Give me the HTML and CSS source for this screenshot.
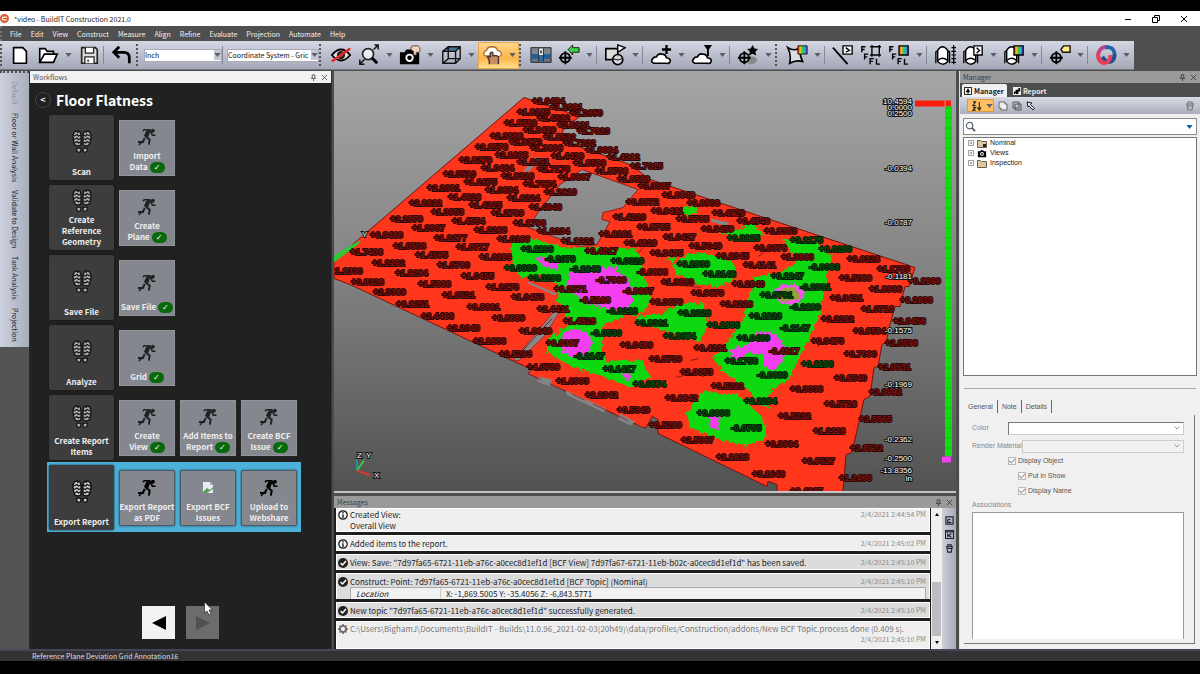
FILE: index.html
```html
<!DOCTYPE html>
<html lang="en">
<head>
<meta charset="utf-8">
<title>*video - BuildIT Construction 2021.0</title>
<link rel="stylesheet" href="styles.css">
</head>
<body>
<svg class="defs" aria-hidden="true">
  <defs>
    <linearGradient id="spectrum"><stop offset="0" stop-color="#e22"/><stop offset=".25" stop-color="#fb2"/><stop offset=".5" stop-color="#3c4"/><stop offset=".75" stop-color="#2ae"/><stop offset="1" stop-color="#83c"/></linearGradient>
    <symbol id="i-new" viewBox="0 0 24 24"><path d="M5 4h10l4 4v13H5z" fill="#fff" stroke="#000" stroke-width="1.8"/></symbol>
    <symbol id="i-open" viewBox="0 0 24 24"><path d="M3 20V5h6l2 3h7v3" fill="#fff" stroke="#000" stroke-width="1.8"/><path d="M3 20l5-9h14l-4 9z" fill="#fff" stroke="#000" stroke-width="1.8"/></symbol>
    <symbol id="i-save" viewBox="0 0 24 24"><path d="M4 4h15l2 2v15H4z" fill="#ddd" stroke="#222" stroke-width="1.800"/><path d="M8 4v6h9V4M7.500 21v-7h10v7M11 17v3" fill="#fff" stroke="#222" stroke-width="1.400"/></symbol>
    <symbol id="i-undo" viewBox="0 0 24 24"><path d="M9 3L3 9l6 6M3 9h11q6 0 6 6v6" fill="none" stroke="#000" stroke-width="3"/></symbol>
    <symbol id="i-eye" viewBox="0 0 24 24"><path d="M2 12q10-12 20 0q-10 12-20 0z" fill="#ddd" stroke="#000" stroke-width="2"/><circle cx="12" cy="12" r="4.500" fill="#222"/><circle cx="12" cy="12" r="1.500" fill="#fff"/><path d="M2 19L22 5" stroke="#e22" stroke-width="2.600"/></symbol>
    <symbol id="i-zoom" viewBox="0 0 24 24"><circle cx="11" cy="11" r="6" fill="#e6eef5" stroke="#222" stroke-width="1.800"/><path d="M15 15l6 6" stroke="#000" stroke-width="3.200"/><path d="M17 6l5-5M18 1h4v5M7 17l-5 5M2 17v5h5" fill="none" stroke="#111" stroke-width="1.600"/></symbol>
    <symbol id="i-camera" viewBox="0 0 24 24"><path d="M1 9h5l2-3h7l2 3h5v13H1z"/><circle cx="11.500" cy="15" r="4.500" fill="#fff"/><circle cx="11.500" cy="15" r="2.500"/><path d="M14 7q-3-5 3-5q6-1 6 4q0 4-4 3v3h-3V8z" fill="#f2d2bd" stroke="#543" stroke-width="1"/></symbol>
    <symbol id="i-cube" viewBox="0 0 24 24"><path d="M3 8l6-5h13l-5 5z" fill="#467199"/><path d="M3 8h14v13H3zM3 8l6-5h13v13l-5 5M17 8l5-5M9 3v13h13M3 21l6-5" fill="none" stroke="#111" stroke-width="1.500"/></symbol>
    <symbol id="i-cloudhand" viewBox="0 0 24 24"><path d="M4 13q-3-4 2-6q1-4 6-4q5 0 6 4q5 1 4 5q-2 3-6 1H7z" fill="#fff" stroke="#a86b28" stroke-width="1.400"/><path d="M9 22v-4l-2-4q2-1 3 1v-5q2-2 3 0v3q6-1 6 2v7" fill="#c98d62" stroke="#433" stroke-width="1.500"/></symbol>
    <symbol id="i-cloud" viewBox="0 0 24 24"><path d="M4 21q-4-2-1-5q1-2 4-2q2-4 6-3q4 0 5 4q5 1 4 4q-1 3-4 2z" fill="#fff" stroke="#000" stroke-width="1.800"/></symbol>
    <symbol id="i-image" viewBox="0 0 24 24"><path d="M1 4h22v16H1z" fill="#6c7480" stroke="#222"/><path d="M2 5h7v6H2zM15 5h7v6h-7z" fill="#7d868f"/><path d="M2 11h7v5H2zM15 11h7v5h-7z" fill="#1f5f98"/><path d="M9 5h1v14H9zM14 5h1v14h-1z" fill="#222"/><path d="M10 5h4v7h-4z" fill="#f2f2f2"/><path d="M11 7h2v3h-2z" fill="#444"/><path d="M10 12h4v7h-4z" fill="#2a6ca5"/></symbol>
    <symbol id="i-target" viewBox="0 0 24 24"><circle cx="8" cy="15" r="5" fill="none" stroke="#000" stroke-width="2"/><path d="M8 8v14M1 15h14" stroke="#000" stroke-width="2"/></symbol>
    <symbol id="i-shapes" viewBox="0 0 24 24"><path d="M2 5h13v12H2z" fill="#ddd" stroke="#000" stroke-width="1.800"/><path d="M15 9V1l8 3z" fill="#fff" stroke="#000" stroke-width="1.500"/><circle cx="15" cy="17" r="5.500" fill="#ddd" fill-opacity=".9" stroke="#000" stroke-width="1.800"/><path d="M10 16q5 3 10 0" fill="none" stroke="#000"/></symbol>
    <symbol id="i-surface" viewBox="0 0 24 24"><path d="M2 4q6 4 13 1q0 8 3 14q-7-2-14 2q2-9-2-17z" fill="#ddd" stroke="#000" stroke-width="1.800"/><path d="M13 2h10v9H13z" fill="url(#spectrum)" stroke="#111"/></symbol>
    <symbol id="i-line" viewBox="0 0 24 24"><path d="M1 4l16 18" stroke="#000" stroke-width="2"/><path d="M12 2h10v9H12zM15 4l4 3-4 2" fill="#fff" stroke="#000" stroke-width="1.500"/></symbol>
    <symbol id="i-ffl" viewBox="0 0 24 24"><path d="M2 9V3h4M2 6h3M5 17v-6h4M5 14h3M11 22v-6h4M11 19h3M18 16v6h4" fill="none" stroke="#000" stroke-width="1.500"/></symbol>
    <symbol id="i-grid" viewBox="0 0 24 24"><path d="M13 1v13M21 1v13M11 3h12M11 12h12" stroke="#000" stroke-width="1.500"/></symbol>
    <symbol id="i-spec" viewBox="0 0 24 24"><path d="M12 2h10v10H12z" fill="url(#spectrum)" stroke="#000" stroke-width="1.400"/></symbol>
    <symbol id="i-tank" viewBox="0 0 24 24"><path d="M4 7q5-8 11 0v12q-5 6-11 0z" fill="#fff" stroke="#000" stroke-width="1.600"/><path d="M2 8v13M17 8v13M2 8h2M15 8h2M4 18q5-5 11 0" fill="none" stroke="#000" stroke-width="1.400"/></symbol>
    <symbol id="i-ruler" viewBox="0 0 24 24"><path d="M21.500 1v21M19 4h5M19 8h5M19 12h5M19 16h5M19 20h5" stroke="#000" stroke-width="1.300"/></symbol>
    <symbol id="i-box" viewBox="0 0 24 24"><path d="M13 2h9v10h-9zM16 4l3 3-3 3" fill="#fff" stroke="#000" stroke-width="1.500"/></symbol>
    <symbol id="i-tag" viewBox="0 0 24 24"><path d="M13 6l3-4h7v7H15z" fill="#ffe98a" stroke="#111" stroke-width="1.500"/></symbol>
    <symbol id="i-rings" viewBox="0 0 24 24"><g fill="none" stroke-width="4"><path d="M7 20Q2 16 4 9Q8 1 16 4" stroke="#b8458f"/><path d="M11 4Q19 2 21 9Q23 17 15 20" stroke="#1f62a8"/><path d="M8 14Q13 21 18 19Q22 16 21 11" stroke="#264c91"/><path d="M4 9Q2 18 9 21Q16 21 17 12" stroke="#ec3d53"/></g></symbol>
    <symbol id="i-caret" viewBox="0 0 8 5"><path d="M0 0h8L4 5z" fill="#5d6069"/></symbol>
    <symbol id="i-feet" viewBox="0 0 20 24">
      <g id="foot"><path d="M2.500 14.500Q-.5 5 2.500 2Q5 0 8 2Q9.700 5 8.800 15Q5.500 17 2.500 14.500z" fill="#c8c8c8" stroke="#0c0c0c" stroke-width="1.400"/><path d="M2 6l3-1.500 1.500 1.500L9 5M2 9.500L5 8l1.500 1.500L9 8.500M2.500 13L5 11.500 6.500 13l2-1M5 2.500h1.500" fill="none" stroke="#0c0c0c" stroke-width="1.200"/><path d="M4.500 18.500q2-.8 4.500 0q.3 3.500-2 4q-2.500-.5-2.500-4z" fill="#c8c8c8" stroke="#0c0c0c" stroke-width="1.200"/></g>
      <use href="#foot" transform="matrix(-1 0 0 1 20 0)"/>
    </symbol>
    <symbol id="i-run" viewBox="0 0 20 20"><circle cx="16.500" cy="3" r="2.200"/><path d="M5.500 3.500L7 2h6l3 6h3.500" fill="none" stroke="#000" stroke-width="1.800"/><path d="M9.500 2.500h4.500L11.500 10l-5-1z"/><path d="M8 9l5 4-1 5.500M7.500 11l-2 4.500H0" fill="none" stroke="#000" stroke-width="2.200"/><path d="M1 19L6 14" stroke="#000" stroke-width="1.500"/></symbol>
    <symbol id="i-pin" viewBox="0 0 8 8"><path d="M2.500 1v4M5.500 1v4M2.500 1h3M1 5h6M4 5v3" fill="none" stroke="currentColor"/></symbol>
    <symbol id="i-close" viewBox="0 0 8 8"><path d="M1 1l6 6M7 1L1 7" fill="none" stroke="currentColor"/></symbol>
    <symbol id="i-info" viewBox="0 0 10 10"><circle cx="5" cy="5" r="4.200" fill="#fff" stroke="#111" stroke-width="1.200"/><path d="M5 4.300V8M5 2v1.400" stroke="#111" stroke-width="1.300"/></symbol>
    <symbol id="i-ok" viewBox="0 0 10 10"><circle cx="5" cy="5" r="5" fill="#222"/><path d="M2.500 5l2 2 3.500-4" fill="none" stroke="#fff" stroke-width="1.500"/></symbol>
    <symbol id="i-gear" viewBox="0 0 10 10"><circle cx="5" cy="5" r="3" fill="none" stroke="#666" stroke-width="1.700"/><path d="M5 0v2M5 8v2M0 5h2M8 5h2M1.500 1.500l1.200 1.200M7.300 7.300l1.200 1.200M8.500 1.500L7.300 2.700M2.700 7.300L1.500 8.500" stroke="#666" stroke-width="1.600"/></symbol>
    <symbol id="i-folder" viewBox="0 0 10 9"><path d="M.5 8.500v-7h3l1 1h5v6z" fill="#d8c8a4" stroke="#6e614b"/></symbol>
    <symbol id="i-plus" viewBox="0 0 7 7"><path d="M.5.5h6v6h-6zM2 3.500h3M3.500 2v3" fill="none" stroke="#888"/></symbol>
    <symbol id="i-chev" viewBox="0 0 6 4"><path d="M.5.500L3 3 5.500.500" fill="none" stroke="#999"/></symbol>
    <symbol id="i-trash" viewBox="0 0 10 10"><path d="M1 3h8M3 3V1h4v2M2 3l1 6h4l1-6M2 5h6" fill="none" stroke="currentColor" stroke-width="1.200"/></symbol>
  </defs>
</svg>

<div class="app">
  <header class="titlebar">
    <svg class="logo" viewBox="0 0 10 10"><circle cx="5" cy="5" r="5" fill="#e2572b"/><path d="M7.500 3.500H4a1.500 1.500 0 000 3h3.500" fill="none" stroke="#fff" stroke-width="1.200"/></svg>
    <span class="title">*video - BuildIT Construction 2021.0</span>
    <div class="window-buttons">
      <button aria-label="Minimize"><svg viewBox="0 0 8 8"><path d="M1 4.500h6" stroke="#000"/></svg></button>
      <button aria-label="Restore"><svg viewBox="0 0 8 8"><path d="M.5 2.500h5v5h-5zM2.500 2.500v-2h5v5h-2" fill="none" stroke="#000"/></svg></button>
      <button aria-label="Close"><svg viewBox="0 0 8 8"><path d="M1 1l6 6M7 1L1 7" stroke="#000"/></svg></button>
    </div>
  </header>

  <nav class="menubar">
    <button>File</button><button>Edit</button><button>View</button><button>Construct</button><button>Measure</button><button>Align</button><button>Refine</button><button>Evaluate</button><button>Projection</button><button>Automate</button><button>Help</button>
  </nav>

  <div class="toolbar-strip">
    <div class="toolbar">
      <i class="grip first"></i>
      <button class="tool" aria-label="New"><svg><use href="#i-new"/></svg></button>
      <button class="tool drop" aria-label="Open"><svg><use href="#i-open"/></svg><svg class="caret"><use href="#i-caret"/></svg></button>
      <button class="tool" aria-label="Save"><svg><use href="#i-save"/></svg></button>
      <i class="sep"></i>
      <button class="tool" aria-label="Undo"><svg><use href="#i-undo"/></svg></button>
      <i class="grip"></i>
      <span class="combo unit"><select aria-label="Unit"><option>Inch</option></select><svg class="caret"><use href="#i-caret"/></svg></span>
      <i class="sep"></i>
      <span class="combo coord"><select aria-label="Coordinate system"><option>Coordinate System - Gric</option></select><svg class="caret"><use href="#i-caret"/></svg></span>
      <i class="grip"></i>
      <button class="tool" aria-label="Hide"><svg><use href="#i-eye"/></svg></button>
      <button class="tool drop" aria-label="Zoom"><svg><use href="#i-zoom"/></svg><svg class="caret"><use href="#i-caret"/></svg></button>
      <button class="tool drop" aria-label="Camera"><svg><use href="#i-camera"/></svg><svg class="caret"><use href="#i-caret"/></svg></button>
      <button class="tool drop" aria-label="View cube"><svg><use href="#i-cube"/></svg><svg class="caret"><use href="#i-caret"/></svg></button>
      <button class="tool drop active" aria-label="Pick cloud"><svg><use href="#i-cloudhand"/></svg><svg class="caret"><use href="#i-caret"/></svg></button>
      <i class="grip"></i>
      <button class="tool" aria-label="Compare"><svg><use href="#i-image"/></svg></button>
      <button class="tool drop" aria-label="Align"><svg viewBox="0 0 24 24"><use href="#i-target"/><path d="M11 6l5-5v3h7v5h-7v3z" fill="#3ad243" stroke="#111"/></svg><svg class="caret"><use href="#i-caret"/></svg></button>
      <i class="sep"></i>
      <button class="tool drop" aria-label="Shapes"><svg><use href="#i-shapes"/></svg><svg class="caret"><use href="#i-caret"/></svg></button>
      <i class="sep"></i>
      <button class="tool drop" aria-label="Add cloud"><svg viewBox="0 0 24 24"><use href="#i-cloud"/><path d="M18 1v10M13 6h10" stroke="#000" stroke-width="2.500"/></svg><svg class="caret"><use href="#i-caret"/></svg></button>
      <button class="tool drop" aria-label="Filter cloud"><svg viewBox="0 0 24 24"><use href="#i-cloud"/><path d="M14 1h9l-3.500 5v7h-2V6z"/></svg><svg class="caret"><use href="#i-caret"/></svg></button>
      <i class="sep"></i>
      <button class="tool drop" aria-label="Feature"><svg viewBox="0 0 24 24"><path d="M14 14q7-2 8 4q-2 5-10 4z" fill="#888"/><use href="#i-target"/><path d="M17 1l2 4 4 .5-3 3 1 4-4-2-4 2 1-4-3-3 4-.5z"/></svg><svg class="caret"><use href="#i-caret"/></svg></button>
      <i class="grip"></i>
      <button class="tool drop" aria-label="Surface deviation"><svg><use href="#i-surface"/></svg><svg class="caret"><use href="#i-caret"/></svg></button>
      <i class="sep"></i>
      <button class="tool" aria-label="Line"><svg><use href="#i-line"/></svg></button>
      <button class="tool" aria-label="Floor grid"><svg viewBox="0 0 24 24"><use href="#i-ffl"/><use href="#i-grid"/></svg></button>
      <button class="tool drop" aria-label="Floor colors"><svg viewBox="0 0 24 24"><use href="#i-ffl"/><use href="#i-spec"/></svg><svg class="caret"><use href="#i-caret"/></svg></button>
      <i class="sep"></i>
      <button class="tool" aria-label="Tank scale"><svg viewBox="0 0 24 24"><use href="#i-tank"/><use href="#i-ruler"/></svg></button>
      <button class="tool drop" aria-label="Tank section"><svg viewBox="0 0 24 24"><use href="#i-tank"/><use href="#i-box"/></svg><svg class="caret"><use href="#i-caret"/></svg></button>
      <button class="tool drop" aria-label="Tank colors"><svg viewBox="0 0 24 24"><use href="#i-tank"/><use href="#i-spec"/></svg><svg class="caret"><use href="#i-caret"/></svg></button>
      <i class="sep"></i>
      <button class="tool drop" aria-label="Annotate"><svg viewBox="0 0 24 24"><use href="#i-target"/><use href="#i-tag"/></svg><svg class="caret"><use href="#i-caret"/></svg></button>
      <i class="sep"></i>
      <button class="tool drop" aria-label="Connect"><svg><use href="#i-rings"/></svg><svg class="caret"><use href="#i-caret"/></svg></button>
    </div>
  </div>

  <main class="workspace">
    <aside class="rail">
      <div class="rail-tabs">
        <button class="muted">Default</button><button>Floor or Wall Analysis</button><button>Validate to Design</button><button>Tank Analysis</button><button>Projection</button>
      </div>
    </aside>

    <section class="workflows">
      <div class="panel-head light"><span>Workflows</span><button aria-label="Pin"><svg><use href="#i-pin"/></svg></button><button aria-label="Close"><svg><use href="#i-close"/></svg></button></div>
      <div class="flow">
        <div class="flow-title"><button class="back" aria-label="Back">&lt;</button><h1>Floor Flatness</h1></div>
        <div class="row"><button class="step"><svg><use href="#i-feet"/></svg><span>Scan</span></button>
          <button class="act"><svg><use href="#i-run"/></svg><span>Import<br>Data <b class="ok">✓</b></span></button></div>
        <div class="row"><button class="step"><svg><use href="#i-feet"/></svg><span>Create<br>Reference<br>Geometry</span></button>
          <button class="act"><svg><use href="#i-run"/></svg><span>Create<br>Plane <b class="ok">✓</b></span></button></div>
        <div class="row"><button class="step"><svg><use href="#i-feet"/></svg><span>Save File</span></button>
          <button class="act"><svg><use href="#i-run"/></svg><span>Save File <b class="ok">✓</b></span></button></div>
        <div class="row"><button class="step"><svg><use href="#i-feet"/></svg><span>Analyze</span></button>
          <button class="act"><svg><use href="#i-run"/></svg><span>Grid <b class="ok">✓</b></span></button></div>
        <div class="row"><button class="step"><svg><use href="#i-feet"/></svg><span>Create Report<br>Items</span></button>
          <button class="act"><svg><use href="#i-run"/></svg><span>Create<br>View <b class="ok">✓</b></span></button>
          <button class="act"><svg><use href="#i-run"/></svg><span>Add Items to<br>Report <b class="ok">✓</b></span></button>
          <button class="act"><svg><use href="#i-run"/></svg><span>Create BCF<br>Issue <b class="ok">✓</b></span></button></div>
        <div class="row current"><button class="step"><svg><use href="#i-feet"/></svg><span>Export Report</span></button>
          <button class="act"><svg><use href="#i-run"/></svg><span>Export Report<br>as PDF</span></button>
          <button class="act"><svg class="broken" viewBox="0 0 10 11"><path d="M0 0h7l3 3v8H0z" fill="#e5edf0"/><path d="M0 10l4-4 3 2 3-3v2l-6 4H0z" fill="#5b9a58"/><path d="M7 0v3h3z" fill="#9ab"/></svg><span>Export BCF<br>Issues</span></button>
          <button class="act"><svg><use href="#i-run"/></svg><span>Upload to<br>Webshare</span></button></div>
        <div class="pager">
          <button aria-label="Previous"><svg viewBox="0 0 14 14"><path d="M14 0v14L0 7z"/></svg></button>
          <button class="off" aria-label="Next" disabled><svg viewBox="0 0 14 14"><path d="M0 0v14l14-7z" fill="#505050"/></svg></button>
          <svg class="cursor" viewBox="0 0 9 14"><path d="M.5.5v11l2.500-2 2 4 2-1-2-4h3.500z" fill="#fff" stroke="#333" stroke-width=".8"/></svg>
        </div>
      </div>
    </section>

    <section class="center">
      <div class="viewport">
        <svg class="scene" viewBox="334 71 622 421" preserveAspectRatio="xMidYMid slice">
          <defs>
            <filter id="rough" x="-5%" y="-5%" width="110%" height="110%" color-interpolation-filters="sRGB"><feTurbulence type="fractalNoise" baseFrequency=".25" numOctaves="2" seed="4"/><feDisplacementMap in="SourceGraphic" scale="7" xChannelSelector="R" yChannelSelector="G"/></filter>
            <linearGradient id="hole" x2="0" y2="1"><stop offset="0" stop-color="#929292"/><stop offset="1" stop-color="#858585"/></linearGradient>
          </defs>
          <path d="M524 98L580 117 565 128 558 140 607 157 630 165 650 180 773 221 915 268 909 287 905 287 900 307 895 307 890 325 886 343 882 345 878 367 874 368 870 397 864 400 852 453 846 455 843 492H777V485L768 482 767 487 658 434V420L652 417 646 428 643 428 528 374 532 370 512 361 350 285 334 279V261z" fill="#ff351c" stroke="#701410" stroke-width="1"/>
          <path d="M334 256L361 240 358 245 334 263z" fill="#2cc935"/>
          <path d="M582 170L638 190 623 208 612 211 603 213 602 220 610 222 597 245 580 247 528 228 538 213 560 185z" fill="url(#hole)" stroke="#8e1c14"/>
          <path d="M523 172L535 158 542 158 529 172zM494 157l8-7-3 8zM528 282l29 12-2 2-27-12zM539 377l13 3-2 7-13-5zM600 402l12 7M566 391l40 18-2 4-38-18zM620 414l15 8-4 4-13-6zM711 219l18 4-2 4-16-5z" fill="#858585"/>
          <path d="M513 361L554 312 559 313 545 336 519 361z" fill="#888" stroke="#a82c22"/>
          <path d="M528 374L643 428" stroke="#8a3434" stroke-dasharray="15 9"/>
          <path d="M519 355l33-36M650 240l-12 14M661 284l40 4M676 378l16-4 12 3M690 361l9-2M817 347l7-4M758 257l6-4" fill="none" stroke="#8b1d18"/>
          <g filter="url(#rough)">
            <g fill="#0ed910">
              <path d="M512 242L530 239 563 248 590 248 637 250 645 275 650 300 645 312 623 317 603 325 602 350 606 362 617 361 643 362 650 377 632 388 603 377 587 372 570 367 547 352 547 340 563 330 570 323 557 300 558 287 547 274 520 278 512 262z"/>
              <path d="M672 267L686 255 706 253 733 262 737 278 717 288 697 284 677 274z"/>
              <path d="M636 316L660 315 683 303 703 304 708 323 700 342 683 338 660 329 636 323z"/>
              <path d="M783 240L813 242 833 257 827 275 823 295 820 313 811 335 797 362 790 380 773 390 765 400 770 410 760 404 750 392 723 372 713 357 730 340 743 320 751 293 753 278 780 273 797 262z"/>
              <path d="M687 413L703 392 737 395 763 417 766 438 747 447 720 440 690 428z"/>
              <path d="M682 208l12-2 4 8-14 2zM718 233l24-4 10-8 5 8 8 6-20 3zM665 260l12-3-3 6z"/>
            </g>
            <g fill="#f33ff0">
              <path d="M570 273L590 267 615 268 630 282 634 299 627 311 608 310 587 303 565 289z"/>
              <path d="M535 258l10 0 7 5 9-2-3 9-8-1-8-5zM621 373l8 0 1 8-6-2z"/>
              <ellipse cx="576" cy="344" rx="16" ry="14"/>
              <path d="M727 350L748 346 757 332 775 333 788 350 775 371 763 366 765 356 750 353 737 361z"/>
              <path d="M709 417l11-1-2 14h-6z"/>
            </g>
            <ellipse cx="789" cy="295" rx="13" ry="9" fill="#9aa03c" stroke="#f055ee" stroke-width="4"/>
          </g>
          <g id="deviations" class="deviations"></g>
          <g class="scale">
            <path d="M915 101h36v6h-36z" fill="#fb1d0c"/><path d="M945 107h7v350h-7z" fill="#10dd10"/><path d="M945 101v6" stroke="#fb8c7c"/><path d="M948.500 108v349" stroke="#0b9c0f" stroke-width="7" stroke-opacity=".4" stroke-dasharray="1 9"/><path d="M942 457h9v6h-9z" fill="#f53ff2"/>
            <text x="912" y="104">10.4594</text><text x="912" y="110">0.0000</text><text x="912" y="116">0.2500</text><text x="912" y="171">-0.0394</text><text x="912" y="225">-0.0787</text><text x="912" y="279">-0.1181</text><text x="912" y="333">-0.1575</text><text x="912" y="387">-0.1969</text><text x="912" y="442">-0.2362</text><text x="912" y="461">-0.2500</text><text x="912" y="473">-13.8356</text><text x="912" y="481">in</text>
          </g>
          <path d="M357 471v-12" stroke="#2d8d93" stroke-width="2"/><path d="M357 471l7-10" stroke="#35cc45" stroke-width="2"/><path d="M357 471l13 5" stroke="#d8372b" stroke-width="2"/>
          <g class="axes"><text x="357" y="458">Z</text><text x="366" y="458">Y</text><text x="374" y="478">X</text><text x="362" y="237">Y</text></g>
        </svg>
      </div>

      <section class="messages">
        <div class="panel-head dim"><span>Messages</span><button aria-label="Pin"><svg><use href="#i-pin"/></svg></button><button aria-label="Close"><svg><use href="#i-close"/></svg></button></div>
        <div class="msg-body">
          <ul class="msg-list">
            <li class="msg first"><svg><use href="#i-info"/></svg><p>Created View:<br>Overall View</p><time>2/4/2021 2:44:54 PM</time></li>
            <li class="msg"><svg><use href="#i-info"/></svg><p>Added items to the report.</p><time>2/4/2021 2:45:02 PM</time></li>
            <li class="msg alt"><svg><use href="#i-ok"/></svg><p>View: Save: "7d97fa65-6721-11eb-a76c-a0cec8d1ef1d [BCF View] 7d97fa67-6721-11eb-b02c-a0cec8d1ef1d" has been saved.</p><time>2/4/2021 2:45:10 PM</time></li>
            <li class="msg alt detail"><svg><use href="#i-ok"/></svg><p>Construct: Point: 7d97fa65-6721-11eb-a76c-a0cec8d1ef1d [BCF Topic] (Nominal)</p><time>2/4/2021 2:45:10 PM</time><dl><dt>Location</dt><dd>X: -1,869.5005 Y: -35.4056 Z: -6,843.5771</dd></dl></li>
            <li class="msg alt"><svg><use href="#i-ok"/></svg><p>New topic "7d97fa65-6721-11eb-a76c-a0cec8d1ef1d" successfully generated.</p><time>2/4/2021 2:45:10 PM</time></li>
            <li class="msg done"><svg><use href="#i-gear"/></svg><p>C:\Users\BighamJ\Documents\BuildIT - Builds\11.0.96_2021-02-03(20h49)\data/profiles/Construction/addons/New BCF Topic.process done (0.409 s).</p><time>2/4/2021 2:45:10 PM</time></li>
          </ul>
          <div class="scroller"><svg viewBox="0 0 6 4"><path d="M1 4h4L3 1z"/></svg><i></i><svg viewBox="0 0 6 4"><path d="M1 0h4L3 3z"/></svg></div>
          <div class="msg-tools">
            <button aria-label="Save log"><svg viewBox="0 0 10 10"><path d="M1 1h8v8H1zM3 4v3h4M3 4h3" fill="none" stroke="#223" stroke-width="1.300"/></svg></button>
            <button aria-label="Clear"><svg viewBox="0 0 10 10"><path d="M.5.500h9v9h-9zM0 2h10M3 4v4M7 4L4 6l3 2" fill="none" stroke="#223" stroke-width="1.300"/></svg></button>
            <button aria-label="Delete"><svg><use href="#i-trash"/></svg></button>
          </div>
        </div>
      </section>
    </section>

    <aside class="manager">
      <div class="panel-head dim"><span>Manager</span><button aria-label="Pin"><svg><use href="#i-pin"/></svg></button><button aria-label="Close"><svg><use href="#i-close"/></svg></button></div>
      <div class="mgr-tabs">
        <button class="on"><svg viewBox="0 0 9 9"><path d="M.5.5h8v8h-8z" fill="#fff" stroke="#000"/><path d="M4.500 1L7 6H5v2H4V6H2z"/></svg>Manager</button>
        <button><svg viewBox="0 0 9 9"><path d="M0 0h9v9H0z" fill="#eee"/><path d="M1 5h2v3H1zM3 3h3v5H3zM6 1h2v4H6z"/></svg>Report</button>
      </div>
      <div class="mgr-tools">
        <button class="sort" aria-label="Sort"><svg viewBox="0 0 11 11"><path d="M1 1h3L1 5h3M1 7h3l-3 3h3M8 1v8M6 7l2 3 2-3" fill="none" stroke="#222" stroke-width="1.200"/></svg><svg class="caret"><use href="#i-caret"/></svg></button>
        <button aria-label="Union"><svg viewBox="0 0 10 10"><path d="M1 1h6v2h2v6H3V7H1z" fill="#eee" stroke="#666"/></svg></button>
        <button aria-label="Intersect"><svg viewBox="0 0 10 10"><path d="M1 1h6v6H1zM3 3h6v6H3z" fill="none" stroke="#555"/></svg></button>
        <button aria-label="Pick"><svg viewBox="0 0 10 10"><path d="M1 1l5 1-1.500 1.500 4 4-1.500 1.500-4-4L2 6z" fill="#ddd" stroke="#222"/></svg></button>
        <button class="bin" aria-label="Delete"><svg><use href="#i-trash"/></svg></button>
      </div>
      <label class="search"><svg viewBox="0 0 12 12"><circle cx="5" cy="5" r="3.500" fill="none" stroke="#567" stroke-width="1.300"/><path d="M7.500 7.500L11 11" stroke="#456" stroke-width="1.800"/></svg><input type="text" aria-label="Search"><svg class="caret" viewBox="0 0 8 5"><path d="M0 0h8L4 5z" fill="#1c5f9d"/></svg></label>
      <ul class="tree">
        <li><svg class="pm"><use href="#i-plus"/></svg><svg viewBox="0 0 10 9"><use href="#i-folder"/><path d="M6 5h3v3H6z" fill="#222"/></svg>Nominal</li>
        <li><svg class="pm"><use href="#i-plus"/></svg><svg viewBox="0 0 24 24"><path d="M1 6h6l2-3h6l2 3h6v16H1z"/><circle cx="12" cy="13" r="5" fill="#fff"/><circle cx="12" cy="13" r="2.500"/></svg>Views</li>
        <li><svg class="pm"><use href="#i-plus"/></svg><svg><use href="#i-folder"/></svg>Inspection</li>
      </ul>
      <hr>
      <div class="prop-tabs"><button class="on">General</button><button>Note</button><button>Details</button></div>
      <div class="props">
        <div class="field"><label for="color">Color</label><span class="pick white"><select id="color" disabled></select><svg><use href="#i-chev"/></svg></span></div>
        <div class="field mat"><label for="mat">Render Material</label><span class="pick"><select id="mat" disabled></select><svg><use href="#i-chev"/></svg></span></div>
        <label class="check"><input type="checkbox" checked disabled>Display Object</label>
        <label class="check in"><input type="checkbox" checked disabled>Put in Show</label>
        <label class="check in"><input type="checkbox" checked disabled>Display Name</label>
        <label class="assoc" for="assoc">Associations</label>
        <textarea id="assoc" readonly></textarea>
      </div>
    </aside>
  </main>

  <footer class="statusbar">Reference Plane Deviation Grid Annotation16</footer>
</div>
<script src="script.js"></script>
</body>
</html>
```
FILE: styles.css
```css
* { box-sizing: border-box; }
body { margin: 0; background: #000; color: #222; font: 7px/10px "Noto Sans CJK SC", "Open Sans", sans-serif; }
button { font: inherit; color: inherit; background: none; border: 0; padding: 0; margin: 0; }
svg { display: block; flex: none; }
ul, dl, dd, p { margin: 0; padding: 0; list-style: none; }
.defs { position: absolute; width: 0; height: 0; }

.app { height: 100vh; padding: 11px 0 13px; display: flex; flex-direction: column; background: #000; }

.titlebar { height: 15px; flex: none; background: #fff; display: flex; align-items: center; gap: 5px; }
.logo { width: 9px; height: 9px; }
.title { flex: 1; }
.window-buttons { display: flex; gap: 20px; padding-right: 12px; }
.window-buttons svg { width: 8px; height: 8px; }

.menubar { height: 15px; flex: none; background: #4f4f50; color: #f2f2f2; display: flex; align-items: center; gap: 9px; padding-left: 8px; border-left: 2px dotted #777; }

.toolbar-strip { height: 29px; flex: none; background: #4f4f50; }
.toolbar { display: flex; height: 29px; width: max-content; padding-right: 1px; align-items: center; background: linear-gradient(#d5d8e3, #b9bdcb 55%, #a5a9b7); border-bottom: 1px solid #74777f; }
.grip { width: 8px; height: 22px; border-left: 2px dotted #555; background-clip: padding-box; }
.grip.first { width: 6px; }
.sep { width: 5px; height: 18px; border-left: 1px solid #85889a; }
.tool { width: 28px; height: 27px; display: flex; align-items: center; justify-content: center; }
.tool svg { width: 22px; height: 22px; }
.tool.drop { width: 41px; justify-content: flex-start; padding-left: 3px; gap: 6px; }
.tool svg.caret, .combo svg.caret { width: 7px; height: 4px; }
.tool.active { background: linear-gradient(#ffd98f, #fdb549 60%, #ffdf8f); border: 1px solid #e8a94c; padding-left: 2px; }
.combo { display: flex; align-items: center; height: 13px; background: #fff; border: 1px solid #a9acb8; }
.combo select { appearance: none; flex: 1; min-width: 0; border: 0; background: none; font: inherit; padding: 0; color: #111; overflow: hidden; }
.combo .caret { background: #c3c7d3; box-sizing: content-box; padding: 3px 0; }
.combo.unit { width: 78px; }
.combo.coord { width: 92px; }

.workspace { flex: 1; min-height: 0; display: flex; background: #4d4d4e; padding-top: 1px; }

.rail { width: 30px; flex: none; background: #535354; border-right: 1px solid #2c2c2c; }
.rail-tabs { display: flex; flex-direction: column; align-items: center; gap: 8px; padding: 8px 0 5px; border-top: 2px dotted #555; background: linear-gradient(90deg, #cdd1dd, #a9aebd); }
.rail-tabs button { writing-mode: vertical-rl; line-height: 12px; color: #222; }
.rail-tabs .muted { color: #8b8e9a; }

.panel-head { height: 12px; flex: none; display: flex; align-items: center; gap: 4px; padding: 0 3px; }
.panel-head span { flex: 1; }
.panel-head svg { width: 7px; height: 7px; }
.panel-head.light { background: #f2f2f4; color: #555; }
.panel-head.dim { background: #9a9a9b; color: #3b3b3b; }

.workflows { width: 302px; flex: none; display: flex; flex-direction: column; border-right: 1px solid #333; }
.flow { flex: 1; background: #212121; color: #eee; display: flex; flex-direction: column; align-items: flex-start; padding: 5px 0 10px 17px; font-size: 8px; font-weight: bold; line-height: 11px; }
.flow-title { display: flex; align-items: center; gap: 5px; height: 23px; margin: 0 0 1px -12px; }
.back { width: 16px; height: 16px; border: 1px solid #444; border-radius: 8px; font-size: 9px; line-height: 12px; }
h1 { margin: 0; color: #fff; font-size: 14px; line-height: 20px; font-weight: bold; }
.row { display: flex; height: 70px; padding: 3px 4px 2px 2px; align-items: center; gap: 5px; }
.row > button { display: flex; flex-direction: column; align-items: center; text-align: center; color: #eee; white-space: nowrap; }
.step { width: 65px; height: 65px; padding: 3px 0; background: #3d3d3d; border-radius: 2px; box-shadow: 0 0 2px #111; }
.step svg { width: 20px; height: 24px; margin: auto; opacity: .8; }
.act { width: 56px; height: 56px; padding: 4px 0 2px; background: #85878f; border: 1px solid #93959c; }
.act svg { width: 18px; height: 18px; margin: auto; opacity: .75; }
.ok { display: inline-block; width: 15px; height: 11px; border-radius: 6px; background: #08690c; color: #fff; font: bold 8px/11px "DejaVu Sans", sans-serif; }
.current { background: #4bb1d9; }
.row.current svg { opacity: 1; }
.current .act { border: 1px solid #4c5c66; border-radius: 2px; box-shadow: 0 0 2px #234; }
.current .act svg.broken { width: 10px; height: 11px; }
.pager { position: relative; display: flex; gap: 11px; margin: auto 0 0 95px; }
.pager button { width: 33px; height: 33px; display: grid; place-items: center; background: #f2f2f2; }
.pager button svg { width: 14px; height: 14px; }
.pager .off { background: #6c6c6c; }
.cursor { position: absolute; left: 62px; top: -5px; width: 9px; height: 15px; }

.center { flex: 1; min-width: 0; display: flex; flex-direction: column; margin: 0 3px 0 2px; }
.viewport { flex: 1; min-height: 0; background: linear-gradient(#a6a5a7, #858585 45%, #525252); border-bottom: 2px solid #c4c4c4; overflow: hidden; }
.scene { width: 100%; height: 100%; }
.deviations text { font: bold 9px "Liberation Sans", Arial, sans-serif; fill: #7a120f; stroke: #2b0504; stroke-width: 2px; paint-order: stroke; }
.deviations text.in { fill: #0a4c0e; stroke: #041c05; }
.scale text, .axes text { font: 8px "Liberation Sans", Arial, sans-serif; fill: #fff; stroke: #111; stroke-width: 2px; paint-order: stroke; }
.scale text { text-anchor: end; }

.messages { flex: none; display: flex; flex-direction: column; margin-top: 3px; }
.msg-body { display: flex; height: 141px; background: #1e1e1e; }
.msg-list { flex: 1; min-width: 0; display: flex; flex-direction: column; gap: 3px; padding: 0 1px 0 2px; }
.msg { display: flex; flex-wrap: wrap; gap: 0 2px; padding: 2px 3px 1px 1px; background: #efeff0; border: 1px solid #fff; font-size: 8px; line-height: 11px; }
.msg.first { padding-top: 0; padding-bottom: 0; }
.msg.alt { background: #dcdcdd; }
.msg svg { width: 10px; height: 10px; margin-top: 1px; }
.msg p { flex: 1; white-space: nowrap; }
.msg time { font-size: 7px; color: #8a8a8a; }
.msg.done { flex: 1; align-content: flex-start; padding-top: 1px; color: #777; }
.msg.done p { flex: 1 0 90%; }
.msg.done time { margin-left: auto; }
.msg.detail { padding-bottom: 0; border-bottom: 0; }
.msg dl { flex: 0 0 calc(100% - 12px); display: flex; margin-left: 12px; background: #f1f1f2; border: 1px solid #aaa; border-bottom: 0; }
.msg dt { width: 90px; padding-left: 5px; font-style: italic; border-right: 1px solid #ccc; }
.msg dd { padding-left: 5px; }
.scroller { width: 11px; display: flex; flex-direction: column; align-items: center; background: #f0f0f0; padding: 4px 0; }
.scroller svg { width: 6px; height: 4px; }
.scroller i { width: 9px; flex: 1; margin: 66px 0 5px; background: #bdbdbf; }
.msg-tools { width: 14px; background: linear-gradient(90deg, #cdd0db, #a6aab8); display: flex; flex-direction: column; align-items: center; gap: 5px; padding-top: 8px; }
.msg-tools svg { width: 9px; height: 9px; color: #223; }

.manager { width: 241px; flex: none; display: flex; flex-direction: column; background: #f0f0f1; color: #222; border-left: 1px solid #ddd; }
.mgr-tabs { display: flex; gap: 4px; height: 14px; background: #4d4d4e; color: #eee; font-weight: bold; padding: 1px 0 0 2px; }
.mgr-tabs button { display: flex; align-items: center; gap: 2px; padding: 0 3px 0 2px; }
.mgr-tabs svg { width: 8px; height: 8px; }
.mgr-tabs .on { background: #f0f0f1; color: #222; border-radius: 2px 2px 0 0; }
.mgr-tools { display: flex; align-items: center; gap: 4px; height: 17px; padding: 0 5px 0 7px; background: linear-gradient(#d8dbe5, #aaaebc); color: #777; }
.mgr-tools svg { width: 10px; height: 10px; }
.mgr-tools .sort { display: flex; align-items: center; gap: 4px; width: 27px; height: 13px; padding: 0 4px; background: #fdbf62; border: 1px solid #e09a3d; }
.mgr-tools .caret { width: 7px; height: 4px; }
.mgr-tools .bin { margin-left: auto; }
.search { display: flex; align-items: center; height: 17px; margin: 4px 3px 2px; padding: 0 3px 0 1px; border: 1px solid #8a8a8a; background: #fff; }
.search svg { width: 11px; height: 11px; }
.search input { flex: 1; min-width: 0; border: 0; outline: 0; font: inherit; }
.search .caret { width: 7px; height: 4px; }
.tree { height: 239px; margin: 0 3px; padding: 0 4px; border: 1px solid #777; background: #fff; font: 7px/10px "Liberation Sans", Arial, sans-serif; }
.tree li { display: flex; align-items: center; height: 10px; gap: 3px; }
.tree svg { width: 10px; height: 9px; }
.tree svg.pm { width: 6px; height: 6px; }
hr { width: calc(100% - 8px); margin: 12px 4px 11px; border: 0; border-top: 1px solid #aaa; }
.prop-tabs { display: flex; height: 15px; margin-left: 8px; color: #555; font: 7px/14px "Liberation Sans", Arial, sans-serif; }
.prop-tabs button { padding: 0 4px; border-right: 1px solid #666; line-height: 14px; height: 13px; }
.prop-tabs .on { padding-left: 0; }
.props { flex: 1; min-height: 0; display: flex; flex-direction: column; margin: 0 5px 5px 4px; padding: 6px 10px 4px 8px; border-right: 1px solid #777; border-bottom: 1px solid #777; color: #555; font: 7px/10px "Liberation Sans", Arial, sans-serif; }
.field { display: flex; align-items: center; color: #888; height: 14px; margin-bottom: 4px; }
.field.mat { margin-bottom: 0; }
.field label { width: 36px; }
.field.mat label { width: 50px; white-space: nowrap; }
.pick { flex: 1; display: flex; align-items: center; height: 13px; padding-right: 3px; border: 1px solid #ccc; }
.pick.white { background: #fff; border-color: #777 #ccc #ccc #777; }
.pick select { flex: 1; height: 9px; appearance: none; border: 0; background: none; }
.pick svg { width: 6px; height: 4px; }
.check { display: flex; align-items: center; gap: 2px; height: 15px; margin-left: 36px; }
.check.in { margin-left: 46px; }
.check input { appearance: none; width: 8px; height: 8px; margin: 0; border: 1px solid #bbb; background: #fafafa; display: grid; place-items: center; }
.check input::before { content: ""; width: 5px; height: 3px; margin-bottom: 1px; border: solid #999; border-width: 0 0 1px 1px; transform: rotate(-45deg); }
.assoc { color: #888; height: 14px; line-height: 14px; }
textarea { flex: 1; min-height: 0; resize: none; border: 1px solid #999; border-bottom: 0; background: #fff; outline: 0; }

.statusbar { height: 12px; flex: none; background: #333335; border-top: 2px solid #45465a; color: #ddd; padding-left: 32px; line-height: 10px; }
```
FILE: script.js
```js
// Deviation annotations: [left, middle, value]; a trailing 1 marks values within tolerance.
const deviations = [
  [532,101,"+2.0484"],[550,107,"+1.2081"],[570,113,"+2.2650"],[517,112,"+1.8185"],[537,118,"+2.4612"],[557,125,"+2.8131"],[577,131,"+2.7823"],
  [504,123,"+1.8789"],[523,130,"+2.8489"],[543,137,"+1.8532"],[563,143,"+2.7232"],[585,150,"+1.9884"],[607,157,"+1.4212"],[630,166,"+2.7015"],
  [490,136,"+2.3886"],[509,142,"+2.8372"],[530,148,"+1.3886"],[551,156,"+1.4439"],[573,163,"+1.8589"],[595,171,"+1.8786"],[617,179,"+1.8586"],
  [475,147,"+2.1576"],[495,155,"+2.1668"],[517,162,"+1.1151"],[537,169,"+2.7178"],[558,177,"+1.8687"],
  [459,160,"+2.8279"],[481,168,"+1.0464"],[501,176,"+2.8326"],[523,184,"+0.7674"],[544,192,"+1.2610"],
  [443,174,"+2.3510"],[464,182,"+1.2675"],[485,190,"+1.0684"],[507,198,"+1.6224"],[529,207,"+1.4646"],
  [427,188,"+2.2081"],[448,197,"+1.4626"],[469,205,"+1.4225"],[491,213,"+1.2789"],[513,223,"+1.1798"],[537,231,"+1.0234"],[561,241,"+1.1222"],[585,251,"+0.4017"],
  [409,203,"+2.2612"],[431,212,"+1.3953"],[452,221,"+1.4554"],[474,230,"+1.2268"],[497,239,"+1.0168"],[521,249,"+0.1186",1],[545,259,"-0.2079",1],[570,269,"-0.1646",1],[596,280,"-0.7969"],[623,291,"-0.8697"],
  [390,219,"+2.2879"],[412,228,"+1.3987"],[434,238,"+1.2277"],[456,247,"+1.0717"],[479,257,"+1.0289"],[504,268,"+0.0889",1],[528,278,"+0.0298",1],[554,289,"+0.2571"],
  [370,235,"+0.3468"],[393,246,"+1.0508"],[415,255,"+1.4595"],[437,265,"+1.0780"],[461,276,"+1.0455"],[486,287,"+1.2273"],
  [350,252,"+1.7408"],[372,263,"+1.2192"],[395,273,"+1.1284"],[418,284,"+1.5888"],[335,271,"1.1330"],[351,282,"+0.8328"],[373,292,"+2.3389"],
  [599,234,"+0.6161"],[613,217,"+1.4220"],[626,202,"+0.3972"],[624,243,"+0.4829"],[611,261,"+0.0329",1],[637,272,"-0.0898"],[637,227,"+0.8765"],[638,186,"+0.3887"],
  [662,195,"+1.8848"],[651,211,"+0.9411"],[687,203,"+0.8908"],[676,219,"+0.5735"],[712,213,"+0.4729"],[737,221,"+0.4748"],[701,229,"+0.3459"],[764,231,"+0.3353"],
  [663,237,"+1.0427"],[727,238,"+0.3125",1],[790,240,"+0.2175",1],[689,246,"+0.5049"],[754,248,"+0.6076"],[819,249,"+0.0280",1],[650,253,"+0.3405"],[716,256,"+0.2345"],[781,257,"+1.3863"],[847,259,"+0.6328"],
  [677,264,"+0.2839",1],[743,265,"+0.4141"],[809,267,"-0.0093",1],[877,269,"+1.1789"],[703,274,"+0.0146",1],[771,276,"+0.1247",1],[839,278,"+0.5089"],[908,281,"+0.1899"],
  [661,282,"+1.3683"],[732,284,"+0.2840"],[800,287,"-0.2381",1],[869,289,"+1.8986"],
  [442,295,"+1.0521"],[511,297,"+1.0453"],[580,300,"-0.5168"],[396,304,"+0.1251"],[467,307,"+0.8861"],[537,309,"+2.4411"],[607,311,"-0.3218",1],[421,316,"+2.4466"],[492,318,"+0.8889"],[563,321,"+1.4528"],[635,323,"+0.3361",1],
  [447,328,"+2.2040"],[519,331,"+1.0649"],[591,333,"-0.0530",1],[473,341,"+2.1686"],[546,343,"+0.0387"],[620,345,"+0.0489"],[499,354,"+2.5283"],[574,356,"-0.2147",1],[527,367,"+4.0739"],[603,369,"+0.1417",1],
  [556,381,"+1.6903"],[633,384,"+0.0874",1],[585,395,"+2.2342"],[617,410,"+0.5349"],
  [691,293,"+0.9679"],[760,295,"+0.0791",1],[830,298,"+0.3431"],[900,300,"+0.2838"],[650,302,"+0.3676"],[720,304,"+0.8216"],[790,307,"-0.2189",1],[861,309,"+1.0710"],
  [678,313,"+0.2323",1],[749,316,"+0.1823",1],[821,319,"+0.2282"],[893,321,"+2.0456"],[707,325,"+0.1386",1],[780,328,"-0.1147",1],[853,331,"+0.9594"],
  [663,336,"+0.3074",1],[737,338,"+0.0489",1],[811,341,"+0.3473"],[885,343,"+2.0598"],[694,348,"+0.4231"],[769,351,"-0.4617"],[844,354,"+0.7090"],
  [649,359,"+0.3739"],[725,361,"+0.1756",1],[801,364,"+0.1188",1],[878,367,"+2.0531"],[680,372,"+2.0053"],[757,375,"-0.0860",1],[834,378,"+0.6540"],
  [711,386,"+0.5222"],[790,389,"+0.3038"],[869,392,"+2.0992"],[665,398,"+0.6642"],[744,401,"+0.2284",1],[824,404,"+0.5726"],[697,413,"+0.0898",1],[778,416,"+0.5232"],[859,419,"+2.5565"],
  [649,425,"+0.5289"],[731,428,"-0.0785",1],[813,431,"+1.2118"],[681,440,"+2.5067"],[765,444,"+0.3984"],[850,448,"+2.8722"],[716,457,"+2.1613"],[802,461,"+0.9527"],[752,474,"+3.1646"],[839,478,"+1.2498"],[790,491,"+0.4367"]
];
const layer = document.getElementById("deviations");
for (const [x, y, value, within] of deviations) {
  const label = document.createElementNS("http://www.w3.org/2000/svg", "text");
  label.setAttribute("x", x);
  label.setAttribute("y", y + 3);
  if (within) label.setAttribute("class", "in");
  label.textContent = value;
  layer.append(label);
}
```
